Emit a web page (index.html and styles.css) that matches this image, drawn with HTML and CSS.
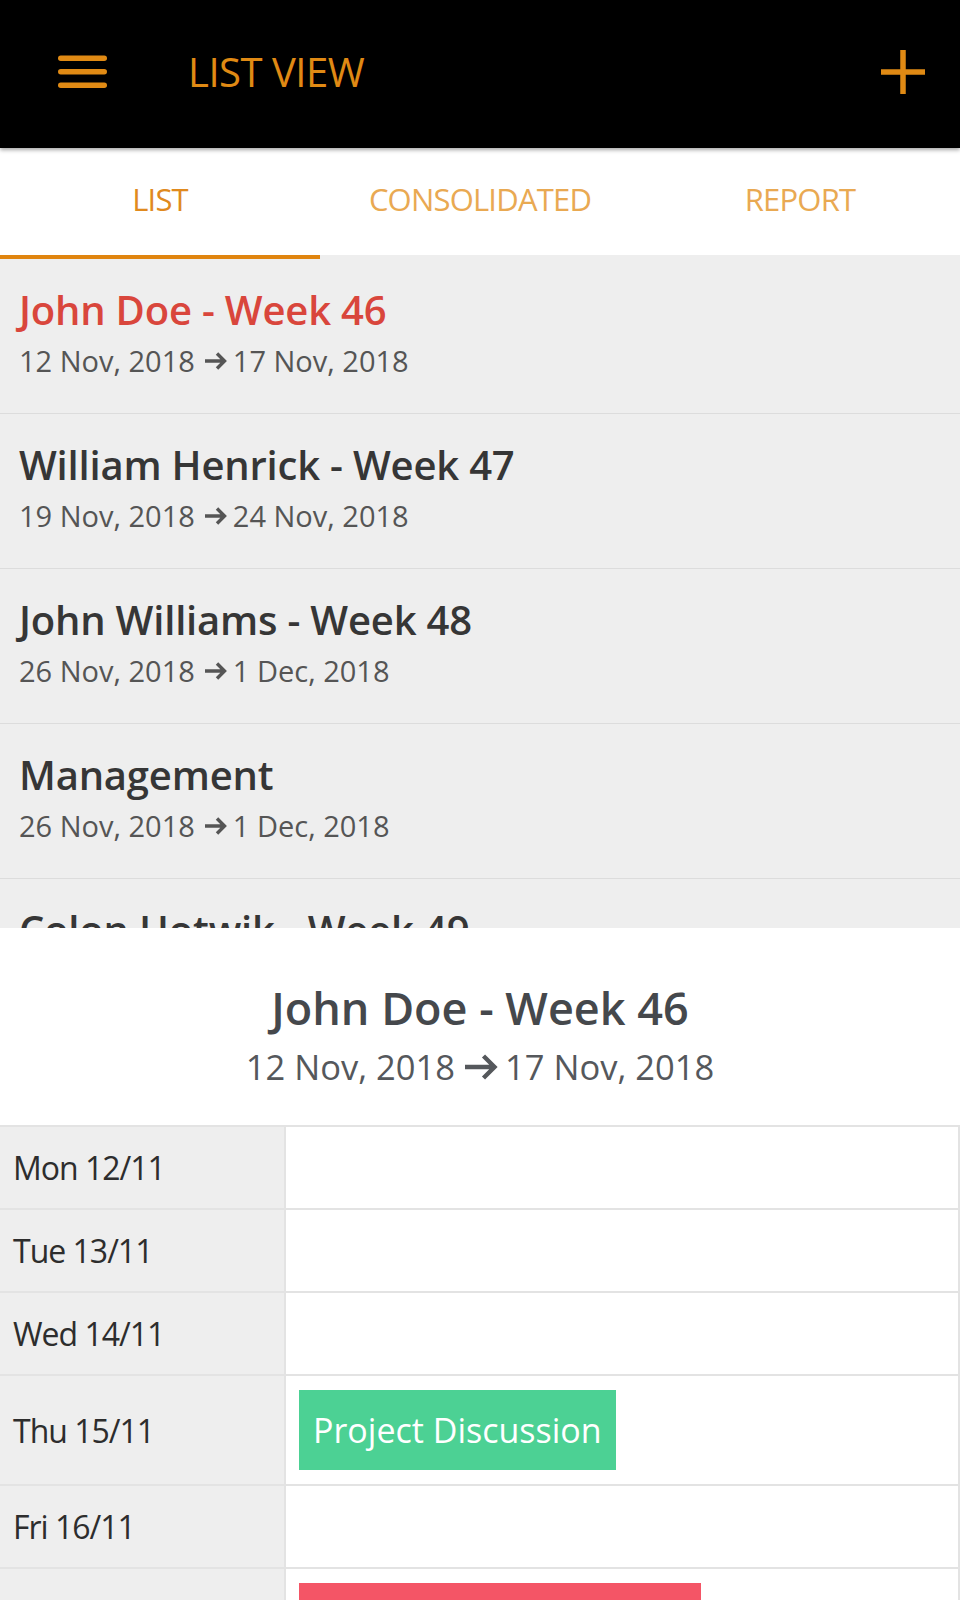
FILE: index.html
```html
<!DOCTYPE html>
<html lang="en">
<head>
<meta charset="utf-8">
<title>List View</title>
<link rel="stylesheet" href="styles.css">
</head>
<body>
<div class="app">
  <header class="topbar">
    <button class="icon-btn" aria-label="Menu">
      <svg class="menu-icon" viewBox="0 0 49 34" aria-hidden="true">
        <rect x="0" y="0.5" width="49" height="5.5" rx="2.75"/>
        <rect x="0" y="14" width="49" height="5.5" rx="2.75"/>
        <rect x="0" y="27.5" width="49" height="5.5" rx="2.75"/>
      </svg>
    </button>
    <h1 class="topbar-title">LIST VIEW</h1>
    <button class="icon-btn add-btn" aria-label="Add">
      <svg class="add-icon" viewBox="0 0 46 46" aria-hidden="true">
        <path d="M23 1 V45 M1 23 H45"/>
      </svg>
    </button>
  </header>

  <nav class="tabs">
    <a class="tab active" href="#">LIST</a>
    <a class="tab" href="#">CONSOLIDATED</a>
    <a class="tab" href="#">REPORT</a>
  </nav>

  <div class="list">
    <div class="item current">
      <div class="item-title">John Doe - Week 46</div>
      <div class="item-dates"><span>12 Nov, 2018</span><svg class="arrow" viewBox="0 0 24 18" aria-hidden="true"><path d="M1 9 H21 M13 1.5 L20.5 9 L13 16.5"/></svg><span>17 Nov, 2018</span></div>
    </div>
    <div class="item">
      <div class="item-title">William Henrick - Week 47</div>
      <div class="item-dates"><span>19 Nov, 2018</span><svg class="arrow" viewBox="0 0 24 18" aria-hidden="true"><path d="M1 9 H21 M13 1.5 L20.5 9 L13 16.5"/></svg><span>24 Nov, 2018</span></div>
    </div>
    <div class="item">
      <div class="item-title">John Williams - Week 48</div>
      <div class="item-dates"><span>26 Nov, 2018</span><svg class="arrow" viewBox="0 0 24 18" aria-hidden="true"><path d="M1 9 H21 M13 1.5 L20.5 9 L13 16.5"/></svg><span>1 Dec, 2018</span></div>
    </div>
    <div class="item">
      <div class="item-title">Management</div>
      <div class="item-dates"><span>26 Nov, 2018</span><svg class="arrow" viewBox="0 0 24 18" aria-hidden="true"><path d="M1 9 H21 M13 1.5 L20.5 9 L13 16.5"/></svg><span>1 Dec, 2018</span></div>
    </div>
    <div class="item">
      <div class="item-title">Colon Hotwik - Week 49</div>
    </div>
  </div>

  <section class="detail">
    <h2 class="detail-title">John Doe - Week 46</h2>
    <div class="detail-range"><span>12 Nov, 2018</span><svg class="arrow-lg" viewBox="0 0 35 26" aria-hidden="true"><path d="M1 13 H31 M19.5 2 L30.5 13 L19.5 24"/></svg><span>17 Nov, 2018</span></div>

    <div class="week">
      <div class="day">
        <div class="day-label">Mon 12/11</div>
        <div class="day-events"></div>
      </div>
      <div class="day">
        <div class="day-label">Tue 13/11</div>
        <div class="day-events"></div>
      </div>
      <div class="day">
        <div class="day-label">Wed 14/11</div>
        <div class="day-events"></div>
      </div>
      <div class="day">
        <div class="day-label">Thu 15/11</div>
        <div class="day-events"><div class="event event-green">Project Discussion</div></div>
      </div>
      <div class="day">
        <div class="day-label">Fri 16/11</div>
        <div class="day-events"></div>
      </div>
      <div class="day">
        <div class="day-label">Sat 17/11</div>
        <div class="day-events"><div class="event event-red"></div></div>
      </div>
    </div>
  </section>
</div>
</body>
</html>
```
FILE: styles.css
```css
* {
  box-sizing: border-box;
}

html,
body {
  margin: 0;
  padding: 0;
}

body {
  width: 960px;
  background: #ffffff;
  color: #333333;
  font-family: "Open Sans", "Noto Sans", sans-serif;
}

/* ---------- top bar ---------- */
.topbar {
  position: relative;
  z-index: 2;
  height: 148px;
  display: flex;
  align-items: center;
  padding: 0 34px 5px 58px;
  background: #000000;
  box-shadow: 0 2px 4px rgba(0, 0, 0, 0.35);
}

.icon-btn {
  display: flex;
  padding: 0;
  border: 0;
  background: none;
  color: #e08a14;
  cursor: pointer;
}

.menu-icon {
  display: block;
  width: 49px;
  height: 34px;
  fill: currentColor;
}

.topbar-title {
  margin: 0 0 0 81px;
  font-size: 40px;
  font-weight: 500;
  line-height: 40px;
  letter-spacing: -0.5px;
  color: #e08a14;
}

.add-btn {
  margin-left: auto;
}

.add-icon {
  display: block;
  width: 46px;
  height: 46px;
  fill: none;
  stroke: currentColor;
  stroke-width: 5.5;
}

/* ---------- tabs ---------- */
.tabs {
  display: flex;
  height: 111px;
  background: #ffffff;
}

.tab {
  flex: 1;
  display: flex;
  align-items: center;
  justify-content: center;
  padding-bottom: 6px;
  border-bottom: 4px solid #eeeeee;
  font-size: 31px;
  font-weight: 500;
  letter-spacing: -0.8px;
  color: #e9a952;
  text-decoration: none;
}

.tab.active {
  color: #e08a1e;
  border-bottom-color: #e0850f;
}

/* ---------- list ---------- */
.list {
  height: 669px;
  overflow: hidden;
  background: #eeeeee;
}

.item {
  padding: 27px 19px 34px;
  border-bottom: 1px solid #dcdcdc;
}

.item-title {
  font-size: 40px;
  font-weight: 600;
  line-height: 48px;
  letter-spacing: -0.2px;
  color: #363636;
}

.item.current .item-title {
  color: #d9463c;
}

.item-dates {
  display: flex;
  align-items: center;
  margin-top: 9px;
  font-size: 29px;
  font-weight: 500;
  line-height: 36px;
  color: #555555;
}

.arrow {
  flex: none;
  width: 24px;
  height: 18px;
  margin: 0 5px 0 9px;
  fill: none;
  stroke: currentColor;
  stroke-width: 3.4;
}

/* ---------- detail ---------- */
.detail {
  padding-top: 53px;
  background: #ffffff;
}

.detail-title {
  margin: 0;
  text-align: center;
  font-size: 45px;
  font-weight: 600;
  line-height: 54px;
  color: #45484c;
}

.detail-range {
  display: flex;
  align-items: center;
  justify-content: center;
  margin: 11px 0 37px;
  font-size: 34.5px;
  font-weight: 400;
  line-height: 42px;
  color: #55585c;
}

.arrow-lg {
  flex: none;
  width: 35px;
  height: 26px;
  margin: 0 6px 0 9px;
  fill: none;
  stroke: currentColor;
  stroke-width: 4.4;
}

/* ---------- week table ---------- */
.week {
  border-top: 2px solid #e3e3e3;
  border-right: 2px solid #e3e3e3;
}

.day {
  display: flex;
  min-height: 83px;
  border-bottom: 2px solid #e3e3e3;
}

.day-label {
  flex: none;
  width: 286px;
  display: flex;
  align-items: center;
  padding-left: 13px;
  background: #eeeeee;
  border-right: 2px solid #e3e3e3;
  font-size: 32px;
  letter-spacing: -1px;
  color: #2d2d2d;
}

.day-events {
  flex: 1;
  display: flex;
  align-items: center;
  padding: 14px 13px;
  background: #ffffff;
}

.event {
  height: 80px;
  display: flex;
  align-items: center;
  padding: 0 14px;
  font-size: 34px;
  color: #ffffff;
}

.event-green {
  background: #4cd194;
}

.event-red {
  width: 402px;
  background: #f45566;
}
```
